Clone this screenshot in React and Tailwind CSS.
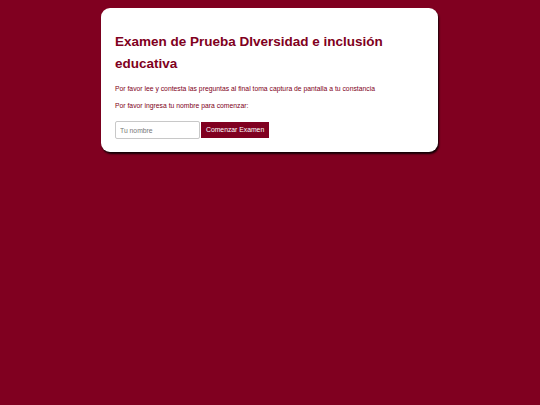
export default function App() {
  return (
    <div
      className="min-h-[405px] w-full bg-[#800020] pt-[8px]"
      style={{ fontFamily: '"Liberation Sans", Arial, sans-serif' }}
    >
      <div className="ml-[101px] w-[337px] rounded-[9px] bg-white px-[14px] pb-[13px] pt-[23px] shadow-[1px_2px_2px_rgba(0,0,0,0.85)]">
        <h1 className="text-[13.5px] font-bold leading-[22px] text-[#800020]">
          Examen de Prueba DIversidad e inclusión educativa
        </h1>
        <p className="mt-[9px] text-[6.8px] leading-[10px] text-[#800020]">
          Por favor lee y contesta las preguntas al final toma captura de pantalla a tu constancia
        </p>
        <p className="mt-[7px] text-[6.8px] leading-[10px] text-[#800020]">
          Por favor ingresa tu nombre para comenzar:
        </p>
        <div className="mt-[10px] flex items-center gap-[1px]">
          <input
            type="text"
            placeholder="Tu nombre"
            className="h-[18px] w-[85px] rounded-[2px] border border-[#c8c8c8] px-[4px] text-[6.8px] text-gray-700 placeholder:text-[#777] outline-none"
          />
          <button className="h-[16px] bg-[#800020] px-[5px] text-[6.8px] text-white">
            Comenzar Examen
          </button>
        </div>
      </div>
    </div>
  );
}
